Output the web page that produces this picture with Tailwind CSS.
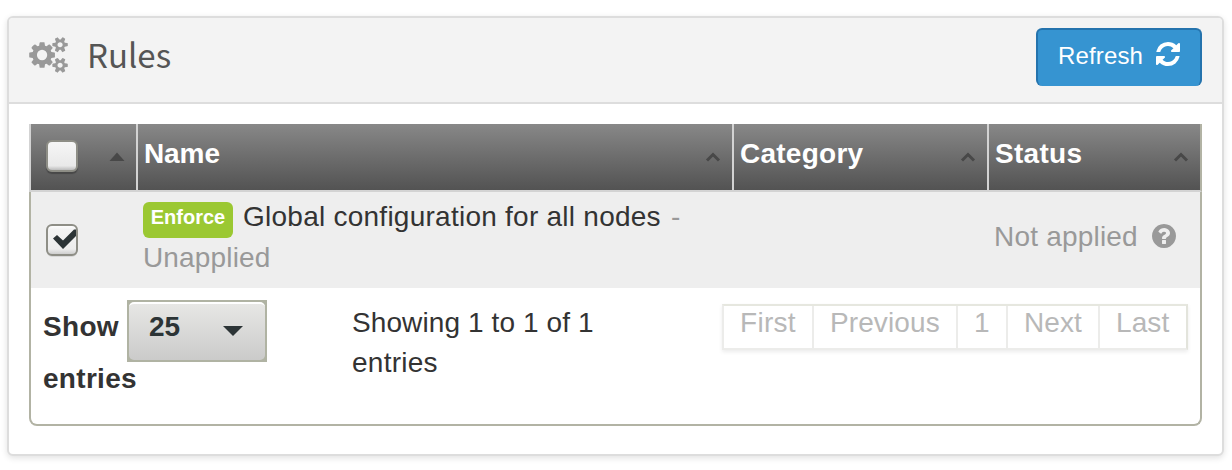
<!DOCTYPE html>
<html lang="en">
<head>
<meta charset="utf-8">
<title>Rules</title>
<script src="https://cdn.jsdelivr.net/npm/@tailwindcss/browser@4"></script>
</head>
<body class="h-[470px] overflow-hidden bg-white pt-4 pl-[7px] font-['Liberation_Sans',Arial,sans-serif] text-[28px] text-[#333]">
<section class="h-[440px] w-[1217px] overflow-visible rounded-[6px] border-2 border-[#ddd] bg-white shadow-[0_2px_6px_rgba(0,0,0,0.12)]">
  <header class="flex h-[86px] items-start rounded-t-[4px] border-b-2 border-[#ddd] bg-[#f3f3f3] pl-5 pr-5">
    <svg class="mt-[19px] h-9 w-[39px] shrink-0 fill-[#999]" viewBox="-64 0 1920 1792"><path d="M832 896q0-106-75-181t-181-75-181 75-75 181 75 181 181 75 181-75 75-181zm768 512q0-52-38-90t-90-38-90 38-38 90q0 53 37.500 90.500t90.500 37.500 90.500-37.500 37.500-90.500zm0-1024q0-52-38-90t-90-38-90 38-38 90q0 53 37.500 90.500t90.500 37.500 90.500-37.500 37.500-90.500zm-384 421v185q0 10-7 19.500t-16 10.500l-155 24q-11 35-32 76 34 48 90 115 7 11 7 20 0 12-7 19-23 30-82.500 89.500t-78.500 59.500q-11 0-21-7l-115-90q-37 19-77 31-11 108-23 155-7 24-30 24h-186q-11 0-20-7.500t-10-17.500l-23-153q-34-10-75-31l-118 89q-7 7-20 7-11 0-21-8-144-133-144-160 0-9 7-19 10-14 41-53t47-61q-23-44-35-82l-152-24q-10-1-17-9.500t-7-19.500v-185q0-10 7-19.500t16-10.500l155-24q11-35 32-76-34-48-90-115-7-11-7-20 0-12 7-20 22-30 82-89t79-59q11 0 21 7l115 90q34-18 77-32 11-108 23-154 7-24 30-24h186q11 0 20 7.500t10 17.500l23 153q34 10 75 31l118-89q8-7 20-7 11 0 21 8 144 133 144 160 0 8-7 19-12 16-42 54t-45 60q23 48 34 82l152 23q10 2 17 10.500t7 19.500zm640 533v140q0 16-149 31-12 27-30 52 51 113 51 138 0 4-4 7-122 71-124 71-8 0-46-47t-52-68q-20 2-30 2t-30-2q-14 21-52 68t-46 47q-2 0-124-71-4-3-4-7 0-25 51-138-18-25-30-52-149-15-149-31v-140q0-16 149-31 13-29 30-52-51-113-51-138 0-4 4-7 4-2 35-20t59-34 30-16q8 0 46 46.500t52 67.500q20-2 30-2t30 2q51-71 92-112l6-2q4 0 124 70 4 3 4 7 0 25-51 138 17 23 30 52 149 15 149 31zm0-1024v140q0 16-149 31-12 27-30 52 51 113 51 138 0 4-4 7-122 71-124 71-8 0-46-47t-52-68q-20 2-30 2t-30-2q-14 21-52 68t-46 47q-2 0-124-71-4-3-4-7 0-25 51-138-18-25-30-52-149-15-149-31v-140q0-16 149-31 13-29 30-52-51-113-51-138 0-4 4-7 4-2 35-20t59-34 30-16q8 0 46 46.500t52 67.500q20-2 30-2t30 2q51-71 92-112l6-2q4 0 124 70 4 3 4 7 0 25-51 138 17 23 30 52 149 15 149 31z"/></svg>
    <h1 class="ml-[19px] mt-3 font-['Noto_Sans_CJK_SC',sans-serif] text-[33px] leading-[48px] text-[#555]">Rules</h1>
    <button class="ml-auto mt-[10px] flex h-[58px] w-[166px] items-start rounded-[6px] border-2 border-b-0 border-[#2473ad] bg-[#3694d1] pl-5 text-white">
      <span class="mt-[5px] text-[24px] leading-[42px] tracking-[0.15px]">Refresh</span>
      <svg class="ml-[13px] mt-3 size-6 fill-white" viewBox="128 128 1536 1536"><path d="M1639 1056q0 5-1 7-64 268-268 434.500t-478 166.500q-146 0-282.500-55t-243.500-157l-129 129q-19 19-45 19t-45-19-19-45v-448q0-26 19-45t45-19h448q26 0 45 19t19 45-19 45l-137 137q71 66 161 102t187 36q134 0 250-65t186-179q11-17 53-117 8-23 30-23h192q13 0 22.500 9.500t9.500 22.500zm25-800v448q0 26-19 45t-45 19h-448q-26 0-45-19t-19-45 19-45l138-138q-148-137-349-137-134 0-250 65t-186 179q-11 17-53 117-8 23-30 23h-199q-13 0-22.500-9.500t-9.500-22.500v-7q65-268 270-434.500t480-166.500q146 0 284 55.500t245 156.500l130-129q19-19 45-19t45 19 19 45z"/></svg>
    </button>
  </header>

  <div class="mx-5 mt-5 h-[302px] w-[1173px]">
    <!-- column headings -->
    <div class="flex h-[68px] border-x-2 border-b-2 border-[#d3d3d3] border-r-[#b2b3a4] bg-linear-to-b from-[#888] to-[#535353] bg-clip-padding font-bold text-white">
      <div class="flex w-[107px] border-r-2 border-[#d3d3d3] pl-[15px]">
        <span class="mt-4 h-8 w-8 rounded-[6px] border-2 border-[#8e8e86] bg-linear-to-b from-[#f6f6f6] from-0% via-[#e9e9e9] via-85% to-[#bcbcbc] shadow-[0_2px_1px_rgba(0,0,0,0.25)]"></span>
        <svg class="ml-[31px] mt-7 h-[10px] w-4 fill-[#484848]" viewBox="0 0 16 10"><path d="M8 0.500 15.500 9H.5z"/></svg>
      </div>
      <div class="flex w-[596px] justify-between border-r-2 border-[#d3d3d3] pl-[6px] pr-[11px]">
        <span class="mt-[10px] leading-[40px] tracking-[-0.1px]">Name</span>
        <svg class="mt-7 h-[10px] w-4 fill-none stroke-[#484848] stroke-[3]" viewBox="0 0 16 10"><path d="M2 8.500 8 2.500l6 6"/></svg>
      </div>
      <div class="flex w-[255px] justify-between border-r-2 border-[#d3d3d3] pl-[6px] pr-[11px]">
        <span class="mt-[10px] leading-[40px] tracking-[0.25px]">Category</span>
        <svg class="mt-7 h-[10px] w-4 fill-none stroke-[#484848] stroke-[3]" viewBox="0 0 16 10"><path d="M2 8.500 8 2.500l6 6"/></svg>
      </div>
      <div class="flex flex-1 justify-between pl-[6px] pr-[11px]">
        <span class="mt-[10px] leading-[40px] tracking-[0.3px]">Status</span>
        <svg class="mt-7 h-[10px] w-4 fill-none stroke-[#484848] stroke-[3]" viewBox="0 0 16 10"><path d="M2 8.500 8 2.500l6 6"/></svg>
      </div>
    </div>

    <div class="h-[234px] overflow-hidden rounded-b-[8px] border-2 border-t-0 border-[#b2b3a4]">
      <!-- rule row -->
      <div class="flex h-24 bg-[#eee]">
        <div class="w-[107px] pl-[15px] pt-8">
          <svg class="h-[34px] w-8" viewBox="0 0 32 34">
            <defs><linearGradient id="box" x2="0" y2="1"><stop offset="0" stop-color="#fff"/><stop offset=".15" stop-color="#f3f3f3"/><stop offset=".8" stop-color="#ededed"/><stop offset="1" stop-color="#c8c8c8"/></linearGradient></defs>
            <rect x="1" y="3" width="30" height="30" rx="5" fill="#d8d8d8"/>
            <rect x="1" y="1" width="30" height="30" rx="5" fill="url(#box)" stroke="#8e8e86" stroke-width="2"/>
            <path d="M7 14.500 11 11 17 16.500 28 5.500H30V12L17 25z" fill="#2c3436"/>
          </svg>
        </div>
        <div class="w-[851px] pl-[5px] pt-[5px] leading-[41px]">
          <div class="flex h-[41px] items-start">
            <span class="mt-[5px] h-9 w-[90px] rounded-[6px] bg-[#9bc832] text-center text-[20px] leading-[31px] font-bold text-white">Enforce</span>
            <span class="-mt-px ml-[10px] tracking-[0.25px]">Global configuration for all nodes</span>
            <span class="-mt-px ml-[10px] text-[#999]">-</span>
          </div>
          <div class="-mt-px tracking-[0.15px] text-[#999]">Unapplied</div>
        </div>
        <div class="flex flex-1 items-start pl-[5px] text-[#999]">
          <span class="mt-[25px] leading-[40px] tracking-[0.2px]">Not applied</span>
          <svg class="ml-[14px] mt-8 size-6 fill-[#999]" viewBox="128 128 1536 1536"><path d="M1024 1376v-192q0-14-9-23t-23-9h-192q-14 0-23 9t-9 23v192q0 14 9 23t23 9h192q14 0 23-9t9-23zm256-672q0-88-55.500-163t-138.500-116-170-41q-243 0-371 213-15 24 8 42l132 100q7 6 19 6 16 0 25-12 53-68 86-92 34-24 86-24 48 0 85.500 26t37.500 59q0 38-20 61t-68 45q-63 28-115.500 86.500t-52.500 125.500v36q0 14 9 23t23 9h192q14 0 23-9t9-23q0-19 21.500-49.500t54.500-49.500q32-18 49-28.500t46-35 44.500-48 28-60.500 12.500-81zm384 192q0 209-103 385.500t-279.500 279.500-385.500 103-385.500-103-279.500-279.500-103-385.500 103-385.500 279.500-279.500 385.500-103 385.500 103 279.500 279.500 103 385.500z"/></svg>
        </div>
      </div>

      <!-- table footer -->
      <div class="flex items-start">
        <div class="w-[309px] pl-[11px] pt-3 font-bold leading-[52px]">
          <div class="flex h-[52px] items-start">
            <span class="w-[85px] pl-px pt-px tracking-[0.3px]">Show</span>
            <div class="h-[62px] w-[140px] bg-[#b0b3a3] p-[2px]">
              <div class="flex h-[58px] items-start justify-between rounded-[5px] border-t-2 border-white bg-linear-to-b from-[#e7e7e5] to-[#cbcbca] pl-5 pr-[22px] text-[#2c3436]">
                <span class="-mt-[3px] leading-[52px]">25</span>
                <svg class="mt-[22px] h-3 w-5 fill-[#2c3436]" viewBox="0 0 20 12"><path d="M0 0h20L10 10z"/></svg>
              </div>
            </div>
          </div>
          <div class="pl-px pt-px tracking-[0.3px]">entries</div>
        </div>
        <div class="w-[382px] pl-3 pt-[15px] leading-[40px] tracking-[0.1px]">Showing 1 to 1 of 1<br><span class="tracking-[0.25px]">entries</span></div>
        <div class="mt-4 flex h-[46px] border-2 border-[#ececea] border-t-[#e6e7df] border-r-[#e3e4dc] leading-[34px] text-[#b8b8b8] shadow-[0_2px_4px_rgba(0,0,0,0.08)]">
          <span class="w-[90px] border-r-2 border-[#ececea] pl-4 tracking-[0.3px]">First</span>
          <span class="w-36 border-r-2 border-[#ececea] pl-4 tracking-[0.1px]">Previous</span>
          <span class="w-[50px] border-r-2 border-[#ececea] pl-4">1</span>
          <span class="w-[92px] border-r-2 border-[#ececea] pl-4 tracking-[0.1px]">Next</span>
          <span class="w-[86px] pl-4 tracking-[0.1px]">Last</span>
        </div>
      </div>
    </div>
  </div>
</section>
</body>
</html>
